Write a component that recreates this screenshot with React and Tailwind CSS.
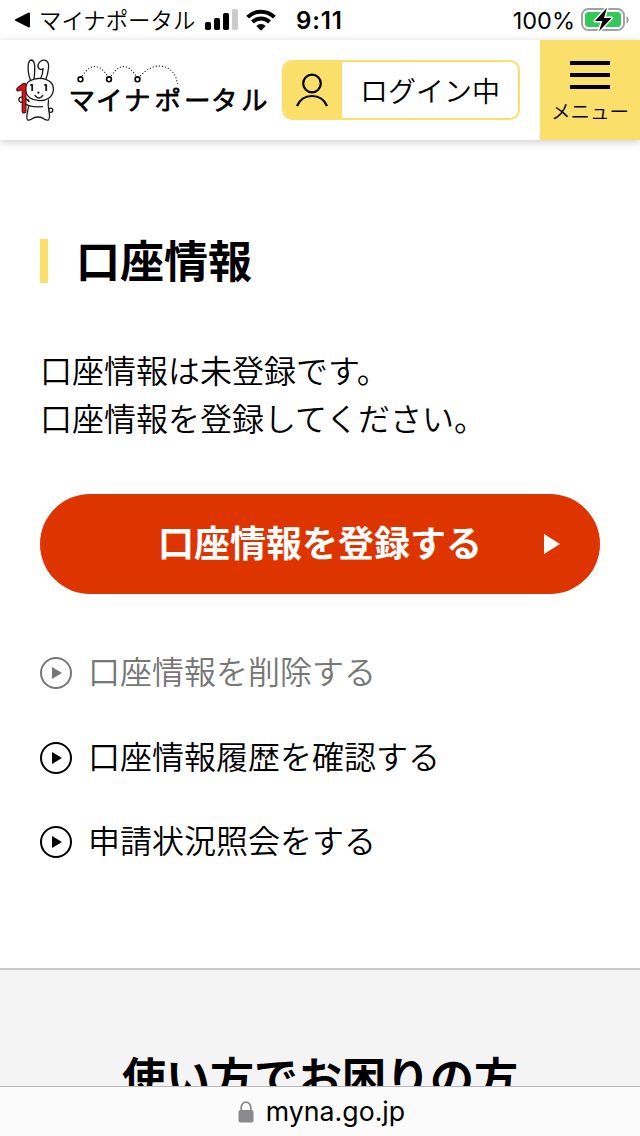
// src/App.jsx
// ============================================
// マイナポータル — 口座情報 (mobile)
// ============================================

const links = [
  { label: '口座情報を削除する', disabled: true },
  { label: '口座情報履歴を確認する' },
  { label: '申請状況照会をする' },
]

function StatusBar() {
  return (
    <div className="h-10 shrink-0 flex items-center justify-between pl-[14px] pr-[10px]">
      <div className="flex items-center">
        <svg width="17" height="16" viewBox="0 0 17 16">
          <path d="M1.4 7.2 14.2.7q1.8-.8 1.8 1v12.6q0 1.8-1.8 1L1.4 8.8q-1.2-.8 0-1.6Z" />
        </svg>
        <span className="ml-[8px] w-[156px] text-[22.4px] leading-none whitespace-nowrap font-[350] pb-px">
          マイナポータル
        </span>
        <svg className="ml-[10px]" width="33" height="22" viewBox="0 0 33 22">
          <rect x="0" y="13" width="6" height="8" rx="1.8" />
          <rect x="9" y="9" width="6" height="12" rx="1.8" />
          <rect x="18" y="4" width="6" height="17" rx="1.8" />
          <rect x="27" y="0" width="6" height="21" rx="1.8" fill="#cbcbcb" />
        </svg>
        <svg className="ml-[8px]" width="30" height="22" viewBox="0 0 30 22">
          <path d="M1.6 8.2a19 19 0 0 1 26.8 0" fill="none" stroke="#000" strokeWidth="4" />
          <path d="M6.5 13a12.2 12.2 0 0 1 17 0" fill="none" stroke="#000" strokeWidth="4" />
          <path d="M10.3 17a6.8 6.8 0 0 1 9.4 0L15 21.7Z" />
        </svg>
        <span className="ml-[20px] pt-px font-['Inter'] text-[24px] font-semibold leading-none tracking-[0.9px]">
          9:11
        </span>
      </div>

      <div className="flex items-center">
        <span className="pt-px font-['Inter'] text-[23.5px] leading-none">100%</span>
        <svg className="ml-[6px]" width="49" height="26" viewBox="0 0 49 26">
          <rect x="1" y="2" width="42" height="21" rx="6.5" fill="#fff" stroke="#a2a2a2" strokeWidth="2" />
          <rect x="4" y="5" width="36" height="15" rx="3.5" fill="#34c759" />
          <path d="M45.5 9v8q2.3-1.2 2.3-4t-2.3-4Z" fill="#a2a2a2" />
          <path
            d="M26 .8 14 14h7.4L18 24.2 30.5 11H23Z"
            stroke="#fff" strokeWidth="3" strokeLinejoin="round" paintOrder="stroke"
          />
        </svg>
      </div>
    </div>
  )
}

// Rabbit mascot holding the red "1"
function Mascot() {
  return (
    <svg className="mt-[2px]" width="42" height="66" viewBox="0 0 42 66" fill="#fff" stroke="#1a1a1a" strokeWidth="1.3" strokeLinecap="round" strokeLinejoin="round">
      {/* tail, body, feet */}
      <circle cx="35.700" cy="52.300" r="2.100" />
      <path d="M13.500 42q1 5-.8 11-1.600 7.500-.2 8.800 2 1 5.500-1.600 5-2.400 10 0 3 2.600 5.600 1.600 1.700-2.500.3-8.800-1.300-6-.4-11" />
      {/* ears */}
      <path d="M15.500 22.500q-3.200-9-2.200-16.200.9-4.300 3.100-4.300 2.800.3 3.300 5.800.3 6-.6 13" />
      <path d="M25.500 21q2.400-5 2.600-10.500-1 1.500-3.300.7-2.600-1.500-1.600-4.700 2-4.700 6.300-4.300 4.700.8 4.100 7.300-.7 7-3.100 13" />
      {/* head */}
      <path d="M10.500 31.500c-.5-7.500 6.500-11.200 14-11.200 8.500 0 14.300 5 13.900 11.500-.5 7-6.500 11.200-14.400 10.900-7-.3-13-4-13.500-11.200Z" />
      {/* face */}
      <path d="M15.300 27h1.900v6M29.300 27h1.900v6" fill="none" strokeWidth="1.800" strokeLinecap="butt" />
      <circle cx="23.400" cy="34.700" r="1.100" fill="#1a1a1a" stroke="none" />
      <path d="M20 37.500q3.900 5 7.800 0" fill="none" />
      {/* arm */}
      <path d="M9 40.500q4.500 5.500 18.500 8.200H18q-6 0-9-4" stroke="none" />
      <path d="M10 40.500q2 .5 4 3M9 45q5 4.600 18.500 3.700" fill="none" />
      <circle cx="6.500" cy="41.800" r="2.600" />
      {/* red one */}
      <path d="M7.200 53V31.500l-4 1.400q-1.600 0-1.500-1.500 0-1.400 1.600-2.200l4.700-3.500q2.700-1 2.900 1.300v26q0 2-1.800 2-1.900 0-1.900-2Z" fill="#e01018" stroke="#4a0d10" strokeWidth="1.100" />
    </svg>
  )
}

function Logo() {
  return (
    <div className="flex items-center">
      <Mascot />
      <svg className="ml-[11px]" width="202" height="66" viewBox="68 57 202 66">
        <g fill="none" stroke="#222" strokeWidth="1.100" strokeDasharray="1.200 1.900">
          <path d="M82 76q13-19 25.500 0" />
          <path d="M111 76q13-19 25 0" />
          <path d="M140 76q10-10 19-10 16 1 18.500 18" />
        </g>
        <g fill="#fff" stroke="#000" strokeWidth="1.600">
          <circle cx="80.500" cy="79.300" r="2.400" />
          <circle cx="109" cy="79.300" r="2.400" />
          <circle cx="137.500" cy="79.300" r="2.400" />
        </g>
        <text
          x="68.500 96 124 154.500 184 211 241" y="109.500"
          fontSize="26.500" stroke="#000" strokeWidth="0.900" strokeLinejoin="round"
          className="font-[350]"
        >
          マイナポータル
        </text>
      </svg>
    </div>
  )
}

function Header() {
  return (
    <header className="relative z-10 h-[100px] shrink-0 flex justify-between bg-white shadow-[0_2px_8px_rgba(0,0,0,0.2)]">
      <div className="flex items-center pl-[15px]">
        <Logo />
        <div className="ml-[12px] w-[238px] h-[60px] flex rounded-[10px] border-2 border-[#fadf6b] bg-white overflow-hidden">
          <div className="w-[58px] bg-[#fadf6b] flex items-center justify-center pr-[2px]">
            <svg width="34" height="34" viewBox="0 0 34 34" fill="none" stroke="#000" strokeWidth="2.200">
              <circle cx="17" cy="10.500" r="8.800" />
              <path d="M2 33q4.300-10 15-10t15 10" />
            </svg>
          </div>
          <span className="flex-1 pl-[18px] text-[28px] leading-[56px] font-[350] whitespace-nowrap">ログイン中</span>
        </div>
      </div>

      <button className="w-[100px] bg-[#fadf6b] flex flex-col items-center" aria-label="メニュー">
        <span className="mt-[21px] w-10 flex flex-col gap-2">
          <span className="h-1 bg-black" />
          <span className="h-1 bg-black" />
          <span className="h-1 bg-black" />
        </span>
        <span className="mt-[7px] text-[19.500px] leading-[30px] font-[350] whitespace-nowrap">メニュー</span>
      </button>
    </header>
  )
}

function LinkItem({ label, disabled }) {
  return (
    <li className={disabled ? 'flex items-center h-12 text-[#767676]' : 'flex items-center h-12 text-black'}>
      <svg width="32" height="32" viewBox="0 0 32 32">
        <circle cx="16" cy="16" r="15" fill="none" stroke="currentColor" strokeWidth="2" />
        <path d="M12 10v12l10-6Z" fill="currentColor" />
      </svg>
      <span className="ml-4 pb-1.5 text-[32px] leading-[48px] font-[350]">{label}</span>
    </li>
  )
}

export default function App() {
  return (
    <div
      lang="ja"
      className="w-[640px] h-[1136px] flex flex-col overflow-hidden bg-white text-black font-['Noto_Sans_CJK_JP',sans-serif]"
    >
      <StatusBar />
      <Header />

      <main className="h-[828px] shrink-0 px-10 pt-[99px]">
        <div className="flex items-center h-11">
          <span className="w-2 h-11 bg-[#fadf6b]" />
          <h1 className="ml-7 pb-1 text-[44px] leading-[44px] font-bold">口座情報</h1>
        </div>

        <p className="mt-[62px] text-[32px] leading-[48px] font-[350]">
          口座情報は未登録です。
          <br />
          口座情報を登録してください。
        </p>

        <button className="mt-[53px] w-full h-[100px] rounded-full bg-[#de3400] text-white flex items-center justify-between px-10">
          <span className="w-4" />
          <span className="pb-[7px] text-[36px] leading-[54px] font-bold">口座情報を登録する</span>
          <svg width="16" height="20" viewBox="0 0 16 20" fill="currentColor">
            <path d="M0 0v20l16-10Z" />
          </svg>
        </button>

        <ul className="mt-[55px] flex flex-col gap-[36.500px]">
          {links.map((link) => (
            <LinkItem key={link.label} {...link} />
          ))}
        </ul>
      </main>

      {/* Help section, cut off by the browser bar */}
      <section className="flex-1 min-h-0 overflow-hidden border-t-2 border-[#cccccc] bg-[#f4f4f4] pt-[73px]">
        <h2 className="text-center text-[44px] leading-[66px] font-bold">使い方でお困りの方</h2>
      </section>

      <footer className="h-[50px] shrink-0 border-t border-[#b8b8b8] bg-[#fbfbfb] flex items-center justify-center">
        <svg width="16" height="22" viewBox="0 0 16 22">
          <path d="M3.200 10V6.500a4.800 5.300 0 0 1 9.600 0V10" fill="none" stroke="#8a8a8e" strokeWidth="1.800" />
          <rect x="0.500" y="9" width="15" height="12.500" rx="2" fill="#8a8a8e" />
        </svg>
        <span className="ml-3 -mr-[3px] font-['Inter'] text-[26.700px] leading-none">myna.go.jp</span>
      </footer>
    </div>
  )
}
